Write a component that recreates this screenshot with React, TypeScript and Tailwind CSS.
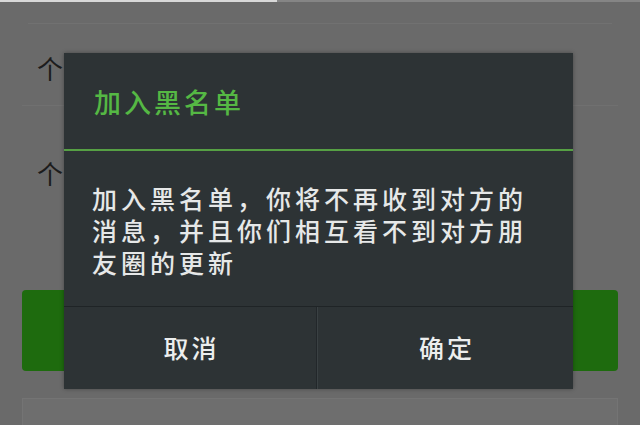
import React from "react";

const cjk = { fontFamily: '"Noto Sans CJK SC", "Noto Sans", sans-serif' };

export default function App() {
  return (
    <div className="relative w-[640px] h-[425px] overflow-hidden bg-[#6a6a6a]" style={cjk}>
      {/* background page */}
      <div className="flex flex-col h-full">
        <div className="flex h-[2px]">
          <div className="w-[277px] bg-[#d8d8d8]" />
          <div className="flex-1 bg-[#858585]" />
        </div>
        <div className="h-[21px]" />
        <div className="mx-[28px] h-[1px] bg-[#717171]" />
        <div className="h-[81px] flex items-start pl-[37px] pt-[31px]">
          <span className="text-[26px] leading-none text-[#1c1c1c]">个</span>
        </div>
        <div className="mx-[22px] h-[1px] bg-[#707070]" />
        <div className="h-[81px] flex items-start pl-[37px] pt-[54px]">
          <span className="text-[26px] leading-none text-[#1c1c1c]">个</span>
        </div>
        <div className="h-[103px]" />
        <div className="mx-[22px] h-[81px] rounded-[4px] bg-[#1e6b0e]" />
        <div className="h-[27px]" />
        <div className="mx-[22px] flex-1 bg-[#6e6e6e] border-t border-x border-[#747474]" />
      </div>

      {/* dialog */}
      <div className="absolute left-[64px] top-[53px] w-[509px] h-[336px] bg-[#2d3335] flex flex-col shadow-[0_0_4px_rgba(0,0,0,0.35)]">
        <div className="h-[96px] flex items-center pl-[30px]">
          <span className="text-[27px] leading-none font-medium tracking-[3px] text-[#55b844]">加入黑名单</span>
        </div>
        <div className="h-[2px] bg-[#56a044]" />
        <div className="h-[155px] pl-[28px] pt-[31px]">
          <p className="text-[25px] leading-[32px] font-medium tracking-[4px] text-[#e6e8e8]">
            加入黑名单，你将不再收到对方的
            <br />
            消息，并且你们相互看不到对方朋
            <br />
            友圈的更新
          </p>
        </div>
        <div className="h-[1px] bg-[#1f2426]" />
        <div className="flex-1 flex">
          <div className="w-[253px] flex items-center justify-center border-r border-[#22272a]">
            <span className="text-[25px] leading-none font-medium tracking-[3px] pl-[3px] -mt-[2px] text-[#eceeee]">取消</span>
          </div>
          <div className="w-[1px] bg-[#3a4143]" />
          <div className="flex-1 flex items-center justify-center">
            <span className="text-[25px] leading-none font-medium tracking-[3px] pl-[3px] -mt-[2px] text-[#eceeee]">确定</span>
          </div>
        </div>
      </div>
    </div>
  );
}
